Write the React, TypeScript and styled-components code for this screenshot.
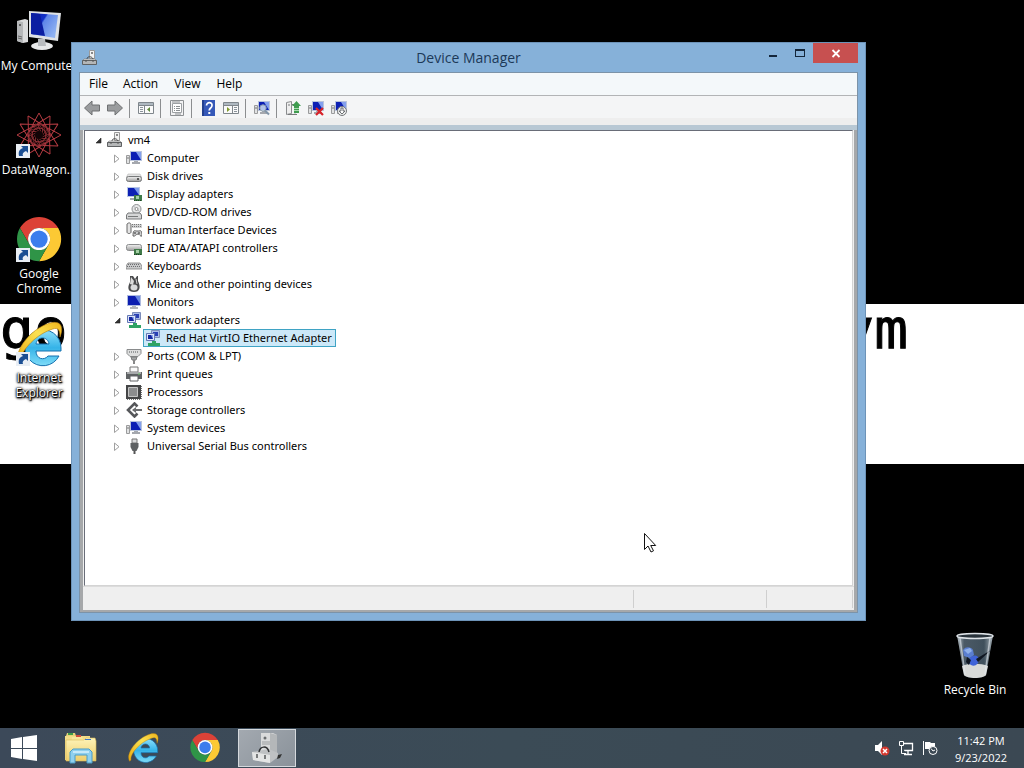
import React, { useState } from "react";
import styled, { createGlobalStyle, css } from "styled-components";

const GlobalStyle = createGlobalStyle`
  * { box-sizing: border-box; }
  html, body, #root { height: 100%; }
  body {
    margin: 0;
    overflow: hidden;
    background: #000;
    font-family: "Open Sans", "Noto Sans", sans-serif;
    font-size: 11px;
    color: #000;
  }
  button { font: inherit; color: inherit; }
`;

const plainButton = css`
  border: 0;
  padding: 0;
  background: transparent;
`;

/* ---------- Desktop ---------- */

const Screen = styled.div`
  display: flex;
  flex-direction: column;
  height: 100vh;
`;

const DesktopArea = styled.main`
  position: relative;
  flex: 1;
  min-height: 0;
  overflow: hidden;
`;

const Wallpaper = styled.div`
  display: flex;
  flex-direction: column;
  height: 100%;
  padding-top: 304px;
`;

const Banner = styled.div`
  display: flex;
  justify-content: space-between;
  height: 160px;
  padding-right: 116px;
  background: #fff;
  color: #000;
  font: 56px/50px "DejaVu Sans Mono", monospace;
  -webkit-text-stroke: 1px #000;
`;

const Shortcuts = styled.nav`
  position: absolute;
  top: 8px;
  left: 0;
  display: grid;
  grid-auto-rows: 104px;
  width: 78px;
`;

const BinSpot = styled.div`
  position: absolute;
  right: 10px;
  bottom: 31px;
  width: 78px;
`;

const Shortcut = styled.button`
  ${plainButton}
  display: flex;
  flex-direction: column;
  align-items: center;
  gap: 2px;
  width: 100%;
  color: #fff;
  font-size: 12px;
  line-height: 15px;
  text-shadow: 0 0 1px #000, 1px 1px 1px #000, 0 1px 2px #000, 0 0 3px #000, 1px 1px 3px #000;
`;

const ShortcutLabel = styled.span`
  white-space: pre;
`;

/* ---------- Window ---------- */

const Frame = styled.section`
  position: absolute;
  top: 42px;
  left: 71px;
  right: 158px;
  bottom: 107px;
  display: flex;
  flex-direction: column;
  padding: 0 7px 7px;
  border: 1px solid #6d93b8;
  background: #86b1d9;
`;

const TitleBar = styled.header`
  display: grid;
  grid-template-columns: 100px 1fr 100px;
  align-items: center;
  height: 29px;
`;

const TitleIcon = styled.span`
  display: flex;
  padding-left: 3px;
`;

const Title = styled.h1`
  margin: 0;
  font-size: 14px;
  font-weight: 400;
  line-height: 20px;
  text-align: center;
  color: #1c3958;
`;

const WindowButtons = styled.div`
  display: flex;
  justify-content: flex-end;
  align-self: start;
`;

const WindowButton = styled.button<{ $close?: boolean }>`
  ${plainButton}
  display: grid;
  place-items: center;
  width: ${(p) => (p.$close ? 45 : 27)}px;
  height: 20px;
  background: ${(p) => (p.$close ? "#c75050" : "transparent")};
`;

const Client = styled.div`
  display: flex;
  flex: 1;
  flex-direction: column;
  min-height: 0;
  border: 1px solid #7c93a8;
  background: #a6a8aa;
`;

const MenuBar = styled.div`
  display: flex;
  height: 23px;
  padding-left: 3px;
  border-bottom: 1px solid #b2b4b6;
  background: #f4f8fa;
`;

const MenuItem = styled.button`
  ${plainButton}
  padding: 0 7px 0 6px;
  font-size: 12px;
  line-height: 22px;

  & + & { padding: 0 8px; }
`;

const ToolBar = styled.div`
  display: flex;
  align-items: center;
  height: 29px;
  padding-bottom: 5px;
  background: linear-gradient(#f4f5f6 22px, #eeeeee 22px);
`;

const ToolButton = styled.button`
  ${plainButton}
  display: grid;
  place-items: center;
  width: 23px;
  height: 22px;
`;

const ToolSeparator = styled.span`
  width: 1px;
  height: 19px;
  margin: 0 4px 0 3px;
  background: #8c8e90;
`;

const Strip = styled.div`
  height: 5px;
  background: #b8c8d4;
`;

const Content = styled.div`
  display: flex;
  flex: 1;
  flex-direction: column;
  min-height: 0;
  margin: 0 3px 2px;
  background: #f0f0f0;
`;

const TreePane = styled.div`
  flex: 1;
  min-height: 0;
  overflow: hidden;
  margin: 0 1px;
  border: 1px solid #696d78;
  border-right-color: #d4d4d4;
  border-bottom-color: #d4d4d4;
  background: #fff;
`;

const TreeList = styled.ul`
  margin: 0;
  padding: 0;
  list-style: none;
`;

const TreeRow = styled.div<{ $level: number }>`
  display: flex;
  align-items: center;
  gap: 1px;
  height: 18px;
  padding-left: ${(p) => 9 + p.$level * 19}px;
`;

const Expander = styled.button`
  ${plainButton}
  display: flex;
  width: 10px;
  height: 10px;
`;

const ExpanderSpace = styled.span`
  width: 10px;
`;

const TreeLabel = styled.button<{ $selected: boolean }>`
  ${plainButton}
  display: flex;
  align-items: center;
  gap: 5px;
  height: 18px;
  padding: 0 3px 0 1px;
  border: 1px solid ${(p) => (p.$selected ? "#3fa3c4" : "transparent")};
  background: ${(p) => (p.$selected ? "#cce8f8" : "transparent")};
  font-family: "Noto Sans", "Open Sans", sans-serif;
  line-height: 16px;
  white-space: nowrap;
`;

const StatusBar = styled.footer`
  display: grid;
  grid-template-columns: 1fr 133px 86px 1px;
  height: 24px;
  padding: 3px 0 2px;
  border-top: 1px solid #dcdcdc;
  background: #efefef;
`;

const StatusCell = styled.span`
  border-right: 1px solid #cfcfcf;
`;

const Pointer = styled.svg`
  position: absolute;
  top: 532px;
  left: 643px;
`;

/* ---------- Taskbar ---------- */

const TaskBar = styled.footer`
  display: flex;
  gap: 4px;
  height: 40px;
  background: linear-gradient(90deg, #3c4959, #3b4b56 50%, #3b4853);
`;

const TaskButton = styled.button<{ $active?: boolean; $start?: boolean }>`
  ${plainButton}
  display: grid;
  place-items: center;
  width: ${(p) => (p.$start ? 48 : 58)}px;
  height: 38px;
  margin-top: 1px;
  ${(p) =>
    p.$active &&
    css`
      border: 1px solid #d5d9dd;
      background: linear-gradient(135deg, #a3a9b0, #8a929a);
    `}
`;

const Tray = styled.div`
  display: flex;
  align-items: center;
  gap: 8px;
  margin-left: auto;
  padding-right: 12px;
  color: #fff;
`;

const TrayButton = styled.button`
  ${plainButton}
  display: flex;
`;

const Clock = styled.button`
  ${plainButton}
  width: 62px;
  margin-left: 4px;
  padding-top: 2px;
  line-height: 17px;
  text-align: center;
`;

const ClockLine = styled.time`
  display: block;
`;

/* ---------- Drawings ---------- */

const SharedPaint = styled.svg`
  position: absolute;
  width: 0;
  height: 0;
`;

const Gradients = () => (
  <SharedPaint aria-hidden="true">
    <defs>
      <linearGradient id="screenBlue" x1="0" y1="0" x2="1" y2="0.6">
        <stop offset="0" stopColor="#0a1fa8" />
        <stop offset="0.45" stopColor="#1230c8" />
        <stop offset="0.5" stopColor="#5f86e8" />
        <stop offset="1" stopColor="#8fb2f2" />
      </linearGradient>
      <linearGradient id="ieBlue" x1="0" y1="0" x2="0" y2="1">
        <stop offset="0" stopColor="#8fe0fb" />
        <stop offset="0.5" stopColor="#35b3e8" />
        <stop offset="1" stopColor="#7fdcf8" />
      </linearGradient>
      <linearGradient id="ieGold" x1="0" y1="1" x2="1" y2="0">
        <stop offset="0" stopColor="#e9a90d" />
        <stop offset="0.6" stopColor="#fbe152" />
        <stop offset="1" stopColor="#efb41c" />
      </linearGradient>
      <linearGradient id="metal" x1="0" y1="0" x2="0" y2="1">
        <stop offset="0" stopColor="#f4f4f4" />
        <stop offset="1" stopColor="#9c9c9c" />
      </linearGradient>
      <linearGradient id="binGlass" x1="0" y1="0" x2="1" y2="0">
        <stop offset="0" stopColor="#b9c3ca" />
        <stop offset="0.2" stopColor="#4b5a66" />
        <stop offset="0.75" stopColor="#40505c" />
        <stop offset="1" stopColor="#a6b1b8" />
      </linearGradient>
      <linearGradient id="folder" x1="0" y1="0" x2="0" y2="1">
        <stop offset="0" stopColor="#fdf3b8" />
        <stop offset="1" stopColor="#efcf6c" />
      </linearGradient>
    </defs>
  </SharedPaint>
);

const LinkBadge = () => (
  <g>
    <rect x="1" y="32" width="14" height="14" fill="#e9eef4" />
    <path d="M4 44c-1-5 1-7 4-8l-2-2h7v7l-2-2c-3 1-4 3-3 5z" fill="#1c4f93" />
  </g>
);

const ComputerArt = () => (
  <svg width="48" height="48" viewBox="0 0 48 48" aria-hidden="true">
    <path d="M2 13l8-2 3 1v22l-5 1-6-2z" fill="#dadbdc" />
    <path d="M2 13l6 1v21l-6-2z" fill="#b5b7b9" />
    <circle cx="5" cy="17" r="1" fill="#444" />
    <path d="M3 28l4 1M3 30l4 1" stroke="#666" />
    <ellipse cx="27" cy="38" rx="11" ry="4" fill="#e8e9ea" />
    <path d="M23 31h7l1 7h-8z" fill="#b9bcbf" />
    <path d="M14 3l32 2-3 28-29-4z" fill="#dfe2e5" />
    <path d="M16 5l27 2-3 23-24-4z" fill="url(#screenBlue)" />
    <path d="M16 5l9 1 5 22-14-2z" fill="#0b1ea2" />
  </svg>
);

const StarArt = () => (
  <svg width="48" height="48" viewBox="0 0 48 48" aria-hidden="true">
    <g fill="none" stroke="#b33b42" strokeWidth="1">
      {[0, 30, 60, 90, 120, 150, 180, 210, 240, 270, 300, 330].map((a) => (
        <g key={a} transform={`rotate(${a} 24 23)`}>
          <path d="M24 1l7 13M24 1l-7 13" />
          <path d="M31 14l-11-2M17 14l8 6" strokeOpacity="0.7" />
          <path d="M19 13a6 6 0 0 1 8 4" strokeOpacity="0.6" />
        </g>
      ))}
      <circle cx="24" cy="23" r="7" strokeOpacity="0.8" />
    </g>
    <circle cx="24" cy="23" r="4" fill="#110406" />
    <LinkBadge />
  </svg>
);

const ChromeShape = () => (
  <g>
    <path d="M24 12L44.78 12A24 24 0 0 0 3.22 12L13.61 30A12 12 0 0 1 24 12Z" fill="#dc4237" />
    <path d="M34.39 30L24 48A24 24 0 0 0 44.78 12L24 12A12 12 0 0 1 34.39 30Z" fill="#fcc934" />
    <path d="M13.61 30L3.22 12A24 24 0 0 0 24 48L34.39 30A12 12 0 0 1 13.61 30Z" fill="#2f9447" />
    <circle cx="24" cy="24" r="12" fill="#fff" />
    <circle cx="24" cy="24" r="9.4" fill="#3b7ded" />
  </g>
);

const ChromeArt = ({ size, badge }: { size: number; badge?: boolean }) => (
  <svg width={size} height={size} viewBox="0 0 48 48" aria-hidden="true">
    <g transform="translate(2 1) scale(0.92)">
      <ChromeShape />
    </g>
    {badge && <LinkBadge />}
  </svg>
);

const ExplorerArt = ({ size, badge }: { size: number; badge?: boolean }) => (
  <svg width={size} height={size} viewBox="0 0 48 48" aria-hidden="true">
    <path
      d="M46 28a18 18 0 1 0-2 8H33c-4 5-12 3-12-5h25zM21 24c1-8 12-8 13 0z"
      fill="url(#ieBlue)"
      stroke="#1670ae"
      strokeWidth="1"
      fillRule="evenodd"
    />
    <path
      d="M4 44C-3 34 14 9 35 3c11-3 14 4 10 14 0-9-3-10-10-7C19 16 4 33 6 42z"
      fill="url(#ieGold)"
      stroke="#b87d0c"
      strokeWidth="0.6"
    />
    {badge && <LinkBadge />}
  </svg>
);

const BinArt = () => (
  <svg width="48" height="48" viewBox="0 0 48 48" aria-hidden="true">
    <path d="M6 3h36l-7 40c-3 4-19 4-22 0z" fill="url(#binGlass)" />
    <path d="M11 34c6-3 19-3 26 0l-2 9c-3 4-19 4-22 0z" fill="#d8dad8" />
    <path d="M12 18c3-4 8-3 10 0l1 5-4 3-6-2z" fill="#5b7fd0" />
    <path d="M19 26c4-4 8-3 9 1 0 5-4 8-8 6-3-2-3-5-1-7z" fill="#3f63d8" />
    <path d="M13 18l6-2 2 3-4 3z" fill="#8fb0ea" />
    <path d="M16 25l4 3-2 5-3-3zM25 27l15-9-13 12z" fill="#101722" />
    <path d="M9 6l5 36M39 6l-5 36" stroke="#e5eaee" strokeOpacity="0.6" strokeWidth="1.5" />
    <ellipse cx="24" cy="4" rx="18" ry="2.5" fill="#28323a" stroke="#dfe4e8" strokeWidth="1.5" />
  </svg>
);

const StartArt = () => (
  <svg width="26" height="26" viewBox="0 0 26 26" aria-hidden="true">
    <path d="M0 4l11-2v11H0zM12 2l14-2v13H12zM0 14h11v10L0 22zM12 14h14v12l-14-2z" fill="#fff" />
  </svg>
);

const FilesArt = () => (
  <svg width="34" height="32" viewBox="0 0 34 32" aria-hidden="true">
    <path d="M2 4l1-3h8l1 3z" fill="#e8d178" />
    <path d="M1 4h25v24H1z" fill="#f2dc88" />
    <path d="M4 1h5v2H4z" fill="#3f9a47" />
    <path d="M8 5h10l1 2h7v22H5z" fill="#f7e59b" />
    <path d="M12 3h5v2h-5z" fill="#d24b3e" />
    <path d="M2 8h18l2-2h9l1 3v20H2z" fill="url(#folder)" stroke="#d9b957" strokeWidth="0.6" />
    <path d="M21 7h6v1h-6z" fill="#3c78c8" />
    <path d="M6 31V20l3-3h16l3 3v11h-5v-8H11v8z" fill="#8fd0ee" stroke="#4a9cc6" />
    <path d="M9 20h16" stroke="#d8f2fc" strokeWidth="1.5" />
  </svg>
);

const ToolboxArt = () => (
  <svg width="34" height="32" viewBox="0 0 34 32" aria-hidden="true">
    <path d="M11 1h12l4 2v22l-5 2H11z" fill="#d9dadb" />
    <path d="M20 1l7 2v22l-7 2z" fill="#b4b7b9" />
    <circle cx="15" cy="6" r="1.5" fill="#6a6d6f" />
    <path d="M12 10h8M12 12h8" stroke="#9b9ea0" />
    <path d="M2 20l17-3 9 4v4l-8 6-17-3z" fill="#bfc1c3" />
    <path d="M2 20l18 3v8L3 28z" fill="#e4e5e5" />
    <path d="M9 20c1-6 8-7 10 0" fill="none" stroke="#303234" strokeWidth="1.5" />
    <path d="M7 22v4M15 23v4" stroke="#55585a" strokeWidth="1.5" />
    <path d="M28 23l4-1-2 4-3 1z" fill="#333" />
  </svg>
);

const CloseGlyph = () => (
  <svg width="10" height="9" viewBox="0 0 10 9" aria-hidden="true">
    <path d="M1.5 1l7 7M8.5 1l-7 7" stroke="#fff" strokeWidth="1.8" />
  </svg>
);

const MaxGlyph = () => (
  <svg width="10" height="8" viewBox="0 0 10 8" aria-hidden="true">
    <path d="M0 0h10v8H0zM1 2v5h8V2z" fill="#14263a" fillRule="evenodd" />
  </svg>
);

const MinGlyph = () => (
  <svg width="8" height="8" viewBox="0 0 8 8" aria-hidden="true">
    <path d="M0 6h8v2H0z" fill="#14263a" />
  </svg>
);

const Small = ({ children }: { children: React.ReactNode }) => (
  <svg width="16" height="16" viewBox="0 0 16 16" aria-hidden="true">
    {children}
  </svg>
);

const MachineShape = () => (
  <>
    <path d="M7.5 0.5h5v8h-5z" fill="#f2f2f2" stroke="#9a9a9a" />
    <path d="M9 2h2v2H9z" fill="#888" />
    <path d="M5 9c0-3 5-3 6 0" fill="none" stroke="#444" />
    <path d="M2 9h11l2 2H0z" fill="#dcdddd" stroke="#777" strokeWidth="0.6" />
    <path d="M0.5 10.5h14v4h-14z" fill="#b4b6b7" stroke="#5f6163" />
    <path d="M4 10v2M11 10v2" stroke="#555" />
  </>
);

const PcShape = () => (
  <>
    <path d="M0.5 5.5h3v8h-3z" fill="#e1e2e3" stroke="#9a9b9c" />
    <path d="M1 8h2" stroke="#777" />
    <path d="M4 1h12v10H4z" fill="#b9c4dc" />
    <path d="M5 2h10v8H5z" fill="#0d20b4" />
    <path d="M10 2h5v8z" fill="#84a0ee" />
    <path d="M8 11h4v1H8zM6 12h8v2H6z" fill="#a5a8ae" />
  </>
);

const CardShape = () => (
  <>
    <path d="M8 9h8v6H8z" fill="#3f7a48" />
    <path d="M10 10h3v3h-3z" fill="#a5cfa5" />
    <path d="M8 14.5h7" stroke="#1f4026" strokeDasharray="1 1" />
  </>
);

const DriveShape = () => (
  <>
    <path d="M2 6h12l1.5 3H.5z" fill="#e3e4e4" stroke="#aaa" strokeWidth="0.5" />
    <rect x="0.5" y="8.5" width="15" height="5" rx="2" fill="url(#metal)" stroke="#77797a" />
    <path d="M11 11h2" stroke="#333" strokeWidth="1.5" />
  </>
);

const NetShape = () => (
  <>
    <path d="M6.5 0.5h8v7h-8z" fill="#a9bbea" stroke="#7c8cba" />
    <path d="M8 2h5v4H8z" fill="#2a3fb4" />
    <path d="M1.5 3.5h8v7h-8z" fill="#dde5fa" stroke="#6478b4" />
    <path d="M3 5h5v4H3z" fill="#1426a0" />
    <path d="M6 5h2v4z" fill="#88a4ee" />
    <path d="M7 11h4v2h4v3H3v-3h4z" fill="#2fa364" />
  </>
);

type IconName =
  | "machine" | "computer" | "disk" | "display" | "dvd" | "hid" | "ide" | "keyboard" | "mouse"
  | "monitor" | "network" | "port" | "printer" | "cpu" | "storage" | "usb";

const deviceArt: Record<IconName, React.ReactNode> = {
  machine: <MachineShape />,
  computer: <PcShape />,
  disk: <DriveShape />,
  display: (
    <>
      <path d="M1 1h13v10H1z" fill="#b7c6e6" />
      <path d="M2 2h11v8H2z" fill="#0d20b4" />
      <path d="M8 2h5v7z" fill="#7c9bea" />
      <path d="M4 12h5v2H4z" fill="#a3a7ad" />
      <CardShape />
    </>
  ),
  dvd: (
    <>
      <circle cx="10.5" cy="5" r="4.5" fill="#e6e7e8" stroke="#8d8f91" />
      <circle cx="10.5" cy="5" r="1.5" fill="#fff" stroke="#888" />
      <path d="M7 2l3 2M14 8l-2-2" stroke="#b5b7b9" />
      <path d="M2 9h12l1.5 2v4H.5v-4z" fill="#d5d6d7" stroke="#77797a" />
      <path d="M2 12.5h10" stroke="#77797a" />
    </>
  ),
  hid: (
    <>
      <path d="M1 2c2-2 4-1 4 1v7c0 2-4 2-4 0z" fill="#e4e4e4" stroke="#666" />
      <path d="M6 2h10v4H6z" fill="#d0d1d2" />
      <path d="M6 2.5h10M6 4.5h10" stroke="#777" strokeDasharray="1 1" />
      <path d="M7 14c0-5 1-6 3-5h3c2-1 3 0 3 5-2 1-2-2-4-2s-3 3-5 2z" fill="#cccdce" stroke="#666" />
      <path d="M9 10v2M13 10v2" stroke="#333" />
    </>
  ),
  ide: (
    <>
      <rect x="0.5" y="4.5" width="15" height="6" rx="2" fill="url(#metal)" stroke="#8b8d8e" />
      <CardShape />
    </>
  ),
  keyboard: (
    <>
      <path d="M2 5h12l2 3v3H0V8z" fill="#c9cacb" stroke="#7d7d7d" strokeWidth="0.8" />
      <path d="M2 6.5h12M1 8.5h14" stroke="#6b6c6e" strokeDasharray="1 1" />
    </>
  ),
  mouse: (
    <>
      <path d="M4 0h3l2 3 2-3h1v5c3 6 2 11-4 11S1 12 4 6z" fill="#4a4b4d" />
      <path d="M5 1l3 4-1 4-3-1z" fill="#dcdcdc" />
      <path d="M10 3l1 5" stroke="#c9c9c9" />
      <ellipse cx="8" cy="11.5" rx="3.5" ry="3" fill="#dadbdc" />
    </>
  ),
  monitor: (
    <>
      <path d="M1 1h14v11H1z" fill="#aebbe0" />
      <path d="M2 2h12v9H2z" fill="#0c1eb0" />
      <path d="M9 2h5v8z" fill="#6787e2" />
      <path d="M6 12h4v1H6zM4 13h8v2H4z" fill="#b2b5ba" />
    </>
  ),
  network: <NetShape />,
  port: (
    <>
      <path d="M1 1.5h14v4l-3 3H4l-3-3z" fill="#dddede" stroke="#898b8c" />
      <path d="M3 4h10" stroke="#55585a" strokeDasharray="1 1" />
      <path d="M5 9h6l-1 3H6z" fill="#a5a7a8" stroke="#7a7c7d" />
      <path d="M8 12v4" stroke="#888" strokeWidth="2" />
    </>
  ),
  printer: (
    <>
      <path d="M4 1h8v5H4z" fill="#fafafa" stroke="#777" />
      <path d="M0 6h16v7H0z" fill="#5f6264" />
      <path d="M1 6h14v2H1z" fill="#a8aaac" />
      <path d="M4 10h8v5H4z" fill="#fff" stroke="#606264" />
      <path d="M12 8h2" stroke="#6fd06f" />
    </>
  ),
  cpu: (
    <>
      <path d="M0 1h15v14H0z" fill="#444546" />
      <path d="M2.5 3.5h9v9h-9z" fill="#8c8d8e" stroke="#c4c4c4" />
      <path d="M15.5 2v13M1 15.5h14" stroke="#777" strokeDasharray="1 1" />
    </>
  ),
  storage: (
    <>
      <path d="M11.500 4.500L8.500 1.500 2 8l6.500 6.500 3-3" fill="none" stroke="#55575a" strokeWidth="2.6" />
      <path d="M7 8h9" stroke="#6a6c6e" strokeWidth="2" />
      <path d="M6 8l4-3v6z" fill="#6a6c6e" />
    </>
  ),
  usb: (
    <>
      <path d="M6 1h5v4H6z" fill="#d8d9da" stroke="#777" />
      <path d="M4.5 5h8v4l-2 4h-4l-2-4z" fill="#5d6062" />
      <path d="M8.5 13v3" stroke="#555" strokeWidth="2" />
    </>
  ),
};

const PaneShape = ({ side }: { side: "left" | "right" }) => (
  <>
    <path d="M0.5 2.5h15v11h-15z" fill="#fafafa" stroke="#7f868c" />
    <path d="M1 3h14v2H1z" fill="#aeb8c0" />
    <path d="M1 5.5h14" stroke="#7f868c" />
    {side === "left" ? (
      <>
        <path d="M2 7.5h3M2 9.5h3M2 11.5h3" stroke="#8b949c" />
        <path d="M6.5 6v7" stroke="#7f868c" />
        <path d="M12 7v5l-3-2.5z" fill="#5f8a3a" />
      </>
    ) : (
      <>
        <path d="M11 7.5h3M11 9.5h3M11 11.5h3" stroke="#8b949c" />
        <path d="M9.5 6v7" stroke="#7f868c" />
        <path d="M4 7v5l3-2.5z" fill="#7f9a2a" />
      </>
    )}
  </>
);

const arrowFill = { fill: "#9a9c9e", stroke: "#6e7072" };

const toolGroups: { label: string; art: React.ReactNode }[][] = [
  [
    { label: "Back", art: <path d="M.5 8L8 1v4h7.500v6H8v4z" {...arrowFill} /> },
    { label: "Forward", art: <path d="M15.500 8L8 1v4H.5v6H8v4z" {...arrowFill} /> },
  ],
  [{ label: "Show/Hide Console Tree", art: <PaneShape side="left" /> }],
  [
    {
      label: "Properties",
      art: (
        <>
          <path d="M1.5 0.5h13v15h-13z" fill="#f3f3f4" stroke="#8d9093" />
          <path d="M3.5 3.5h9v9h-9z" fill="#fff" stroke="#9da1a4" />
          <path d="M3 2h8M5 6.5h1M7 6.5h4M5 8.5h1M7 8.5h4M5 10.5h1M7 10.5h4M6 14h6" stroke="#8b8f92" />
        </>
      ),
    },
  ],
  [
    {
      label: "Help",
      art: (
        <>
          <path d="M2 0h13v16H2z" fill="#3558b8" />
          <path d="M2 0h2v16H2z" fill="#23408f" />
          <path d="M6.5 5.5c0-4 6-3.5 5.5 0C12 8 9.2 8 9.2 10.5" fill="none" stroke="#fff" strokeWidth="1.7" />
          <path d="M8.3 12h2v2h-2z" fill="#fff" />
        </>
      ),
    },
    { label: "Show/Hide Action Pane", art: <PaneShape side="right" /> },
  ],
  [
    {
      label: "Scan for hardware changes",
      art: (
        <>
          <PcShape />
          <circle cx="9" cy="8" r="3.2" fill="#dcecf8" fillOpacity="0.8" stroke="#8b9bab" />
          <path d="M11 10.5l4 4" stroke="#8195a8" strokeWidth="2" />
        </>
      ),
    },
  ],
  [
    {
      label: "Update Driver Software",
      art: (
        <>
          <path d="M1.5 2.5l5-1v12l-5 1z" fill="#eee" stroke="#8a8c8e" />
          <path d="M3 5h2M3 14.5h9M7 4.5h3v9" stroke="#77797b" fill="none" />
          <path d="M11.5 1L16 6h-2v7h-5V6H7z" fill="#3f9c50" />
          <path d="M9 8.5h5M9 10.5h5" stroke="#a9dcae" />
        </>
      ),
    },
    {
      label: "Uninstall",
      art: (
        <>
          <PcShape />
          <path d="M8 8l7 7M15 8l-7 7" stroke="#d8232a" strokeWidth="2.2" />
        </>
      ),
    },
    {
      label: "Disable",
      art: (
        <>
          <PcShape />
          <circle cx="11" cy="11" r="4.5" fill="#eceded" stroke="#75787a" />
          <path d="M10 8h2v3h2l-3 3-3-3h2z" fill="#fff" stroke="#606366" strokeWidth="0.9" />
        </>
      ),
    },
  ],
];

/* ---------- Data ---------- */

type Device = { name: string; icon: IconName; open?: boolean; children?: Device[]; leaf?: boolean };

const machine: Device = {
  name: "vm4",
  icon: "machine",
  open: true,
  children: [
    { name: "Computer", icon: "computer" },
    { name: "Disk drives", icon: "disk" },
    { name: "Display adapters", icon: "display" },
    { name: "DVD/CD-ROM drives", icon: "dvd" },
    { name: "Human Interface Devices", icon: "hid" },
    { name: "IDE ATA/ATAPI controllers", icon: "ide" },
    { name: "Keyboards", icon: "keyboard" },
    { name: "Mice and other pointing devices", icon: "mouse" },
    { name: "Monitors", icon: "monitor" },
    {
      name: "Network adapters",
      icon: "network",
      open: true,
      children: [{ name: "Red Hat VirtIO Ethernet Adapter", icon: "network", leaf: true }],
    },
    { name: "Ports (COM & LPT)", icon: "port" },
    { name: "Print queues", icon: "printer" },
    { name: "Processors", icon: "cpu" },
    { name: "Storage controllers", icon: "storage" },
    { name: "System devices", icon: "computer" },
    { name: "Universal Serial Bus controllers", icon: "usb" },
  ],
};

type NodeProps = { device: Device; level: number; selected: string; onSelect: (name: string) => void };

const TreeNode = ({ device, level, selected, onSelect }: NodeProps) => {
  const [open, setOpen] = useState(Boolean(device.open));
  return (
    <li>
      <TreeRow $level={level}>
        {device.leaf ? (
          <ExpanderSpace />
        ) : (
          <Expander aria-label={`Toggle ${device.name}`} aria-expanded={open} onClick={() => setOpen(!open)}>
            <svg width="10" height="10" viewBox="0 0 10 10" aria-hidden="true">
              {open ? (
                <path d="M7 3v5H2z" fill="#333" stroke="#222" strokeWidth="0.6" />
              ) : (
                <path d="M1.5 2v7.5L6 5.75z" fill="#fff" stroke="#a0a0a0" />
              )}
            </svg>
          </Expander>
        )}
        <TreeLabel $selected={selected === device.name} onClick={() => onSelect(device.name)}>
          <Small>{deviceArt[device.icon]}</Small>
          {device.name}
        </TreeLabel>
      </TreeRow>
      {open && device.children && (
        <TreeList>
          {device.children.map((child) => (
            <TreeNode key={child.name} device={child} level={level + 1} selected={selected} onSelect={onSelect} />
          ))}
        </TreeList>
      )}
    </li>
  );
};

const DeviceManager = () => {
  const [selected, setSelected] = useState("Red Hat VirtIO Ethernet Adapter");
  return (
    <Frame aria-label="Device Manager">
      <TitleBar>
        <TitleIcon>
          <Small><MachineShape /></Small>
        </TitleIcon>
        <Title>Device Manager</Title>
        <WindowButtons>
          <WindowButton aria-label="Minimize"><MinGlyph /></WindowButton>
          <WindowButton aria-label="Maximize"><MaxGlyph /></WindowButton>
          <WindowButton $close aria-label="Close"><CloseGlyph /></WindowButton>
        </WindowButtons>
      </TitleBar>
      <Client>
        <MenuBar>
          {["File", "Action", "View", "Help"].map((item) => (
            <MenuItem key={item}>{item}</MenuItem>
          ))}
        </MenuBar>
        <ToolBar>
          {toolGroups.map((group, index) => (
            <React.Fragment key={group[0].label}>
              {index > 0 && <ToolSeparator />}
              {group.map((tool) => (
                <ToolButton key={tool.label} aria-label={tool.label}>
                  <Small>{tool.art}</Small>
                </ToolButton>
              ))}
            </React.Fragment>
          ))}
        </ToolBar>
        <Strip />
        <Content>
          <TreePane>
            <TreeList>
              <TreeNode device={machine} level={0} selected={selected} onSelect={setSelected} />
            </TreeList>
          </TreePane>
          <StatusBar>
            <StatusCell />
            <StatusCell />
            <StatusCell />
          </StatusBar>
        </Content>
      </Client>
    </Frame>
  );
};

const shortcuts = [
  { label: "My Computer", art: <ComputerArt /> },
  { label: "DataWagon...", art: <StarArt /> },
  { label: "Google\nChrome", art: <ChromeArt size={48} badge /> },
  { label: "Internet\nExplorer", art: <ExplorerArt size={48} badge /> },
];

export default function App() {
  return (
    <Screen>
      <GlobalStyle />
      <Gradients />
      <DesktopArea>
        <Wallpaper>
          <Banner>
            <span>go</span>
            <span>vm</span>
          </Banner>
        </Wallpaper>
        <Shortcuts aria-label="Desktop">
          {shortcuts.map((item) => (
            <Shortcut key={item.label}>
              {item.art}
              <ShortcutLabel>{item.label}</ShortcutLabel>
            </Shortcut>
          ))}
        </Shortcuts>
        <BinSpot>
          <Shortcut>
            <BinArt />
            <ShortcutLabel>Recycle Bin</ShortcutLabel>
          </Shortcut>
        </BinSpot>
        <DeviceManager />
        <Pointer width="14" height="21" viewBox="0 0 14 21" aria-hidden="true">
          <path d="M1.5 1.5v16l3.5-3.5 3 6 2.5-1.2-2.8-5.300h5z" fill="#fff" stroke="#111" />
        </Pointer>
      </DesktopArea>
      <TaskBar>
        <TaskButton $start aria-label="Start"><StartArt /></TaskButton>
        <TaskButton aria-label="File Explorer"><FilesArt /></TaskButton>
        <TaskButton aria-label="Internet Explorer"><ExplorerArt size={32} /></TaskButton>
        <TaskButton aria-label="Google Chrome"><ChromeArt size={32} /></TaskButton>
        <TaskButton $active aria-label="Device Manager"><ToolboxArt /></TaskButton>
        <Tray>
          <TrayButton aria-label="Volume muted">
            <Small>
              <path d="M1 5h3l4-4v14l-4-4H1z" fill="#fff" />
              <circle cx="11" cy="11" r="4.5" fill="#d5392f" />
              <path d="M9 9l4 4M13 9l-4 4" stroke="#fff" strokeWidth="1.5" />
            </Small>
          </TrayButton>
          <TrayButton aria-label="Network">
            <Small>
              <path d="M5.5 3.5h9v7h-9M10 11v3M6 14.5h8" fill="none" stroke="#fff" strokeWidth="1.3" />
              <path d="M1.5 1.5h4v4h-4zM3.5 6v7.5H8" fill="#3b4853" stroke="#fff" />
            </Small>
          </TrayButton>
          <TrayButton aria-label="Action Center">
            <Small>
              <path d="M1.5 1v14" stroke="#fff" />
              <path d="M3 2h5l1 1h4v6H3z" fill="#fff" />
              <circle cx="11" cy="10.5" r="4" fill="#3b4853" stroke="#fff" />
              <path d="M9 8.5l2 2.5 2-1" fill="none" stroke="#fff" />
            </Small>
          </TrayButton>
          <Clock>
            <ClockLine>11:42 PM</ClockLine>
            <ClockLine>9/23/2022</ClockLine>
          </Clock>
        </Tray>
      </TaskBar>
    </Screen>
  );
}
